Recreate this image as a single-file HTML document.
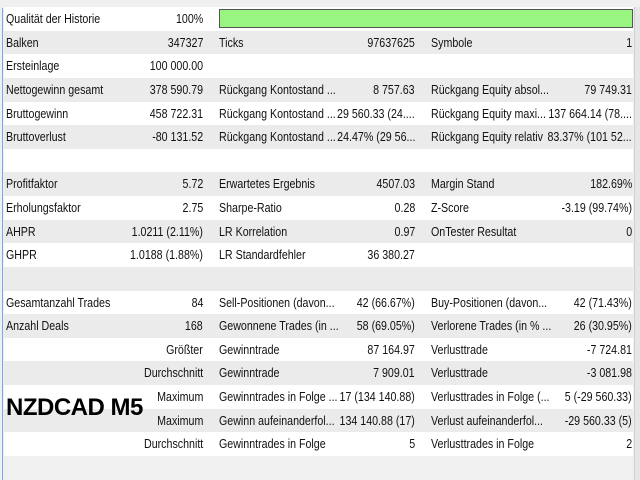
<!DOCTYPE html>
<html><head><meta charset="utf-8"><style>
*{margin:0;padding:0;box-sizing:border-box}
body{width:640px;height:480px;overflow:hidden;background:#f0f0f0;position:relative;font-family:"Liberation Sans",sans-serif;font-size:13px;color:#111}
#tbl{position:absolute;left:4px;top:7px;width:629px;background:#fff}
.r{position:relative;height:23.63px}
.g{background:#ebebeb}
.c{position:absolute;top:4px;white-space:nowrap;line-height:16px}
.c span{display:inline-block;transform:scaleX(0.82)}
.l span{transform-origin:left}
.v span{transform-origin:right}
.v{text-align:right}
#lb{position:absolute;left:2px;top:8px;width:1px;height:472px;background:#8aa6cc}
#sb{position:absolute;left:634px;top:7px;width:6px;height:473px;background:#e6e6e6;border-left:1px solid #d0d0d0}
#bar{position:absolute;left:215px;top:2px;width:414px;height:19px;background:#98f57f;border:1px solid #555}
#nz{position:absolute;left:6px;top:394px;font-weight:bold;font-size:24px;letter-spacing:-0.5px;color:#000;line-height:28px}
</style></head><body>
<div id="lb"></div><div id="sb"></div>
<div id="tbl">
<div class="r"><div class="c l" style="left:2px"><span>Qualität der Historie</span></div><div class="c v" style="right:430px"><span>100%</span></div><div id="bar"></div></div>
<div class="r g"><div class="c l" style="left:2px"><span>Balken</span></div><div class="c v" style="right:430px"><span>347327</span></div><div class="c l" style="left:215px"><span>Ticks</span></div><div class="c v" style="right:218px"><span>97637625</span></div><div class="c l" style="left:427px"><span>Symbole</span></div><div class="c v" style="right:1px"><span>1</span></div></div>
<div class="r"><div class="c l" style="left:2px"><span>Ersteinlage</span></div><div class="c v" style="right:430px"><span>100 000.00</span></div></div>
<div class="r g"><div class="c l" style="left:2px"><span>Nettogewinn gesamt</span></div><div class="c v" style="right:430px"><span>378 590.79</span></div><div class="c l" style="left:215px"><span>Rückgang Kontostand ...</span></div><div class="c v" style="right:218px"><span>8 757.63</span></div><div class="c l" style="left:427px"><span>Rückgang Equity absol...</span></div><div class="c v" style="right:1px"><span>79 749.31</span></div></div>
<div class="r"><div class="c l" style="left:2px"><span>Bruttogewinn</span></div><div class="c v" style="right:430px"><span>458 722.31</span></div><div class="c l" style="left:215px"><span>Rückgang Kontostand ...</span></div><div class="c v" style="right:218px"><span>29 560.33 (24....</span></div><div class="c l" style="left:427px"><span>Rückgang Equity maxi...</span></div><div class="c v" style="right:1px"><span>137 664.14 (78....</span></div></div>
<div class="r g"><div class="c l" style="left:2px"><span>Bruttoverlust</span></div><div class="c v" style="right:430px"><span>-80 131.52</span></div><div class="c l" style="left:215px"><span>Rückgang Kontostand ...</span></div><div class="c v" style="right:218px"><span>24.47% (29 56...</span></div><div class="c l" style="left:427px"><span>Rückgang Equity relativ</span></div><div class="c v" style="right:1px"><span>83.37% (101 52...</span></div></div>
<div class="r"></div>
<div class="r g"><div class="c l" style="left:2px"><span>Profitfaktor</span></div><div class="c v" style="right:430px"><span>5.72</span></div><div class="c l" style="left:215px"><span>Erwartetes Ergebnis</span></div><div class="c v" style="right:218px"><span>4507.03</span></div><div class="c l" style="left:427px"><span>Margin Stand</span></div><div class="c v" style="right:1px"><span>182.69%</span></div></div>
<div class="r"><div class="c l" style="left:2px"><span>Erholungsfaktor</span></div><div class="c v" style="right:430px"><span>2.75</span></div><div class="c l" style="left:215px"><span>Sharpe-Ratio</span></div><div class="c v" style="right:218px"><span>0.28</span></div><div class="c l" style="left:427px"><span>Z-Score</span></div><div class="c v" style="right:1px"><span>-3.19 (99.74%)</span></div></div>
<div class="r g"><div class="c l" style="left:2px"><span>AHPR</span></div><div class="c v" style="right:430px"><span>1.0211 (2.11%)</span></div><div class="c l" style="left:215px"><span>LR Korrelation</span></div><div class="c v" style="right:218px"><span>0.97</span></div><div class="c l" style="left:427px"><span>OnTester Resultat</span></div><div class="c v" style="right:1px"><span>0</span></div></div>
<div class="r"><div class="c l" style="left:2px"><span>GHPR</span></div><div class="c v" style="right:430px"><span>1.0188 (1.88%)</span></div><div class="c l" style="left:215px"><span>LR Standardfehler</span></div><div class="c v" style="right:218px"><span>36 380.27</span></div></div>
<div class="r g"></div>
<div class="r"><div class="c l" style="left:2px"><span>Gesamtanzahl Trades</span></div><div class="c v" style="right:430px"><span>84</span></div><div class="c l" style="left:215px"><span>Sell-Positionen (davon...</span></div><div class="c v" style="right:218px"><span>42 (66.67%)</span></div><div class="c l" style="left:427px"><span>Buy-Positionen (davon...</span></div><div class="c v" style="right:1px"><span>42 (71.43%)</span></div></div>
<div class="r g"><div class="c l" style="left:2px"><span>Anzahl Deals</span></div><div class="c v" style="right:430px"><span>168</span></div><div class="c l" style="left:215px"><span>Gewonnene Trades (in ...</span></div><div class="c v" style="right:218px"><span>58 (69.05%)</span></div><div class="c l" style="left:427px"><span>Verlorene Trades (in % ...</span></div><div class="c v" style="right:1px"><span>26 (30.95%)</span></div></div>
<div class="r"><div class="c v" style="right:430px"><span>Größter</span></div><div class="c l" style="left:215px"><span>Gewinntrade</span></div><div class="c v" style="right:218px"><span>87 164.97</span></div><div class="c l" style="left:427px"><span>Verlusttrade</span></div><div class="c v" style="right:1px"><span>-7 724.81</span></div></div>
<div class="r g"><div class="c v" style="right:430px"><span>Durchschnitt</span></div><div class="c l" style="left:215px"><span>Gewinntrade</span></div><div class="c v" style="right:218px"><span>7 909.01</span></div><div class="c l" style="left:427px"><span>Verlusttrade</span></div><div class="c v" style="right:1px"><span>-3 081.98</span></div></div>
<div class="r"><div class="c v" style="right:430px"><span>Maximum</span></div><div class="c l" style="left:215px"><span>Gewinntrades in Folge ...</span></div><div class="c v" style="right:218px"><span>17 (134 140.88)</span></div><div class="c l" style="left:427px"><span>Verlusttrades in Folge (...</span></div><div class="c v" style="right:1px"><span>5 (-29 560.33)</span></div></div>
<div class="r g"><div class="c v" style="right:430px"><span>Maximum</span></div><div class="c l" style="left:215px"><span>Gewinn aufeinanderfol...</span></div><div class="c v" style="right:218px"><span>134 140.88 (17)</span></div><div class="c l" style="left:427px"><span>Verlust aufeinanderfol...</span></div><div class="c v" style="right:1px"><span>-29 560.33 (5)</span></div></div>
<div class="r"><div class="c v" style="right:430px"><span>Durchschnitt</span></div><div class="c l" style="left:215px"><span>Gewinntrades in Folge</span></div><div class="c v" style="right:218px"><span>5</span></div><div class="c l" style="left:427px"><span>Verlusttrades in Folge</span></div><div class="c v" style="right:1px"><span>2</span></div></div>
</div>
<div id="nz">NZDCAD M5</div>
</body></html>
